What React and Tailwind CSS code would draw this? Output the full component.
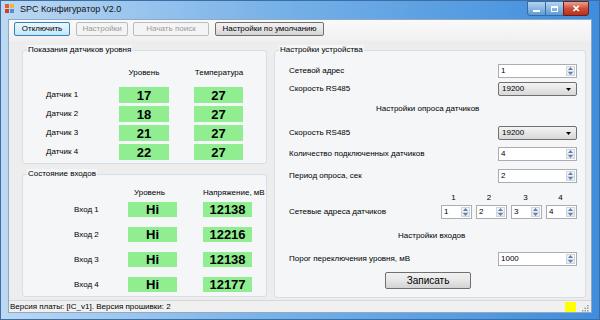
import React from "react";

const Arrow = ({ up, color = "#5d7fa8" }) => (
  <svg width="5" height="3" viewBox="0 0 5 3">
    <path d={up ? "M0 3h5L2.5 0z" : "M0 0h5L2.5 3z"} fill={color} />
  </svg>
);

const Spin = ({ value, w = "w-[79px]" }) => (
  <div className={`flex h-[14px] ${w} border border-[#abadb3] bg-white`}>
    <span className="flex-1 pl-[2px] text-[8px] leading-[12px] text-black">
      {value}
    </span>
    <div className="m-[1px] flex w-[9px] flex-col border border-[#cfd5dc] bg-gradient-to-b from-[#f4f6f9] to-[#e3e8ee]">
      <div className="flex flex-1 items-center justify-center border-b border-[#cfd5dc]">
        <Arrow up />
      </div>
      <div className="flex flex-1 items-center justify-center">
        <Arrow />
      </div>
    </div>
  </div>
);

const Combo = ({ value }) => (
  <div className="flex h-[14px] w-[79px] items-center rounded-[2px] border border-[#707070] bg-gradient-to-b from-[#f3f3f3] to-[#d8d8d8] pl-[3px] pr-[5px]">
    <span className="flex-1 text-[8px] leading-[12px] text-black">{value}</span>
    <Arrow color="#000" />
  </div>
);

const Btn = ({ children, w, focus, disabled, className = "" }) => {
  let look =
    "border-[#707070] bg-gradient-to-b from-[#f2f2f2] via-[#e6e6e6] to-[#d3d3d3] text-black";
  if (focus)
    look =
      "border-[#3c7fb1] bg-gradient-to-b from-[#eaf6fd] via-[#d9f0fc] to-[#bee6fd] text-black";
  if (disabled) look = "border-[#b9bdc0] bg-[#f4f4f4] text-[#9a9a9a]";
  return (
    <div
      className={`flex h-[14px] ${w} items-center justify-center whitespace-nowrap rounded-[2px] border text-[8px] leading-[12px] ${look} ${className}`}
    >
      {children}
    </div>
  );
};

const Group = ({ title, className = "", children }) => (
  <div
    className={`flex flex-col rounded-[3px] border border-[#d5dfe5] bg-[#f4f6f8] ${className}`}
  >
    <span className="-mt-[6px] ml-[4px] w-fit bg-[#f4f6f8] px-[1px] text-[8px] leading-[10px] text-black">
      {title}
    </span>
    {children}
  </div>
);

const Val = ({ children, h = "h-[16px]" }) => (
  <div
    className={`flex ${h} items-center justify-center bg-[#90ee90] text-[13px] font-bold leading-none text-black`}
  >
    {children}
  </div>
);

const sensors = [
  ["Датчик 1", "17", "27"],
  ["Датчик 2", "18", "27"],
  ["Датчик 3", "21", "27"],
  ["Датчик 4", "22", "27"],
];

const inputs = [
  ["Вход 1", "Hi", "12138"],
  ["Вход 2", "Hi", "12216"],
  ["Вход 3", "Hi", "12138"],
  ["Вход 4", "Hi", "12177"],
];

const Row = ({ label, className = "", children }) => (
  <div className={`flex items-center justify-between pl-[14px] pr-[8px] ${className}`}>
    <span className="text-[8px] leading-[10px] text-black">{label}</span>
    {children}
  </div>
);

export default function App() {
  return (
    <div className="flex h-[320px] w-[600px] flex-col overflow-hidden border border-[#3a6ea5] bg-[linear-gradient(to_right,#bcd8f2,#78b2e8_45%,#3f8ddc)] font-['Liberation_Sans',Arial,sans-serif]">
      {/* title bar */}
      <div className="flex h-[18px] items-start">
        <svg width="10" height="10" viewBox="0 0 10 10" className="ml-[4px] mt-[3px]">
          <rect x="0" y="0" width="4" height="4" fill="#e8592b" />
          <rect x="5" y="0" width="4" height="4" fill="#f6b23c" />
          <rect x="0" y="5" width="4" height="4" fill="#d93a2a" />
          <rect x="5" y="5" width="4" height="4" fill="#4f8fd8" />
        </svg>
        <span className="ml-[5px] mt-[3px] text-[9px] leading-[10px] text-[#111]">
          SPC Конфигуратор V2.0
        </span>
        <div className="ml-auto mr-[10px] flex h-[15px]">
          <div className="flex w-[19px] items-center justify-center rounded-bl-[3px] border border-[#3b6a9c] bg-gradient-to-b from-[#b5d3f0] to-[#5b9bd8]">
            <div className="mt-[4px] h-[2px] w-[7px] bg-white" />
          </div>
          <div className="flex w-[17px] items-center justify-center border-y border-[#3b6a9c] bg-gradient-to-b from-[#b5d3f0] to-[#5b9bd8]">
            <div className="h-[6px] w-[7px] border border-t-2 border-white" />
          </div>
          <div className="flex w-[26px] items-center justify-center rounded-br-[3px] border border-[#6b1e16] bg-gradient-to-b from-[#e7a091] via-[#cf4d38] to-[#b8301d] text-[10px] font-bold leading-none text-white">
            ✕
          </div>
        </div>
      </div>

      {/* client */}
      <div className="mx-[7px] flex h-[294px] flex-col border border-[#8ea9c8] bg-[#ededed]">
        {/* toolbar */}
        <div className="flex h-[21px] items-start bg-gradient-to-b from-[#fafafa] to-[#f0f0f0] pl-[5px] pt-[2px]">
          <Btn w="w-[56px]" focus>
            Отключить
          </Btn>
          <Btn w="w-[52px]" disabled className="ml-[6px]">
            Настройки
          </Btn>
          <Btn w="w-[76px]" disabled className="ml-[5px]">
            Начать поиск
          </Btn>
          <Btn w="w-[109px]" className="ml-[6px]">
            Настройки по умолчанию
          </Btn>
        </div>

        {/* main */}
        <div className="flex h-[259px] items-start pl-[13px]">
          <div className="flex w-[245px] flex-col">
            <Group title="Показания датчиков уровня" className="mt-[9px] h-[114px]">
              <div className="mt-[13px] grid grid-cols-[48px_50px_50px] gap-x-[25px] whitespace-nowrap pl-[23px] text-[8px] leading-[10px] text-black">
                <span />
                <span className="text-center">Уровень</span>
                <span className="text-center">Температура</span>
              </div>
              <div className="mt-[9px] grid grid-cols-[48px_50px_49px] gap-x-[25px] gap-y-[3px] pl-[23px]">
                {sensors.map(([n, a, b]) => (
                  <React.Fragment key={n}>
                    <span className="self-center whitespace-nowrap text-[8px] leading-[10px] text-black">{n}</span>
                    <Val>{a}</Val>
                    <Val>{b}</Val>
                  </React.Fragment>
                ))}
              </div>
            </Group>
            <Group title="Состояние входов" className="mt-[10px] h-[123px]">
              <div className="mt-[9px] grid grid-cols-[28px_49px_56px] gap-x-[26px] whitespace-nowrap pl-[51px] text-[8px] leading-[10px] text-black">
                <span />
                <span className="pl-[6px]">Уровень</span>
                <span>Напряжение, мВ</span>
              </div>
              <div className="mt-[4px] grid grid-cols-[28px_49px_49px] gap-x-[26px] gap-y-[10px] pl-[51px]">
                {inputs.map(([n, a, b]) => (
                  <React.Fragment key={n}>
                    <span className="self-center whitespace-nowrap text-[8px] leading-[10px] text-black">{n}</span>
                    <Val h="h-[15px]">{a}</Val>
                    <Val h="h-[15px]">{b}</Val>
                  </React.Fragment>
                ))}
              </div>
            </Group>
          </div>

          <Group title="Настройки устройства" className="ml-[7px] mt-[9px] h-[248px] w-[312px]">
            <Row label="Сетевой адрес" className="mt-[9px]">
              <Spin value="1" />
            </Row>
            <Row label="Скорость RS485" className="mt-[4px]">
              <Combo value="19200" />
            </Row>
            <span className="ml-[101px] mt-[8px] text-[8px] leading-[10px] text-black">
              Настройки опроса датчиков
            </span>
            <Row label="Скорость RS485" className="mt-[12px]">
              <Combo value="19200" />
            </Row>
            <Row label="Количество подключенных датчиков" className="mt-[7px]">
              <Spin value="4" />
            </Row>
            <Row label="Период опроса, сек" className="mt-[8px]">
              <Spin value="2" />
            </Row>
            <div className="mt-[10px] ml-auto mr-[8px] grid grid-cols-[31px_31px_31px_31px] gap-x-[4px] text-center text-[8px] leading-[10px] text-black">
              <span className="pr-[6px]">1</span>
              <span className="pr-[5px]">2</span>
              <span className="pr-[2px]">3</span>
              <span className="pr-[2px]">4</span>
            </div>
            <Row label="Сетевые адреса датчиков" className="mt-[2px]">
              <div className="flex gap-x-[4px]">
                <Spin value="1" w="w-[31px]" />
                <Spin value="2" w="w-[31px]" />
                <Spin value="3" w="w-[31px]" />
                <Spin value="4" w="w-[31px]" />
              </div>
            </Row>
            <span className="ml-[123px] mt-[12px] text-[8px] leading-[10px] text-black">
              Настройки входов
            </span>
            <Row label="Порог переключения уровня, мВ" className="mt-[11px]">
              <Spin value="1000" />
            </Row>
            <Btn w="w-[86px]" className="ml-[110px] mt-[6px] !h-[17px] !text-[10px]">
              Записать
            </Btn>
          </Group>
        </div>

        {/* status bar */}
        <div className="flex h-[12px] items-center border-t border-[#d7d7d7] bg-[#f0f0f0] pl-[1px] pr-[2px]">
          <span className="flex-1 text-[8px] leading-[10px] text-black">
            Версия платы: [IC_v1]. Версия прошивки: 2
          </span>
          <div className="h-[10px] w-[11px] bg-[#ffff00]" />
          <svg width="7" height="7" viewBox="0 0 7 7" className="ml-[6px] mt-[3px]">
            {[
              [5, 0],
              [5, 2.5],
              [2.5, 2.5],
              [5, 5],
              [2.5, 5],
              [0, 5],
            ].map(([x, y]) => (
              <rect key={`${x}-${y}`} x={x} y={y} width="1.5" height="1.5" fill="#9a9a9a" />
            ))}
          </svg>
        </div>
      </div>
    </div>
  );
}
